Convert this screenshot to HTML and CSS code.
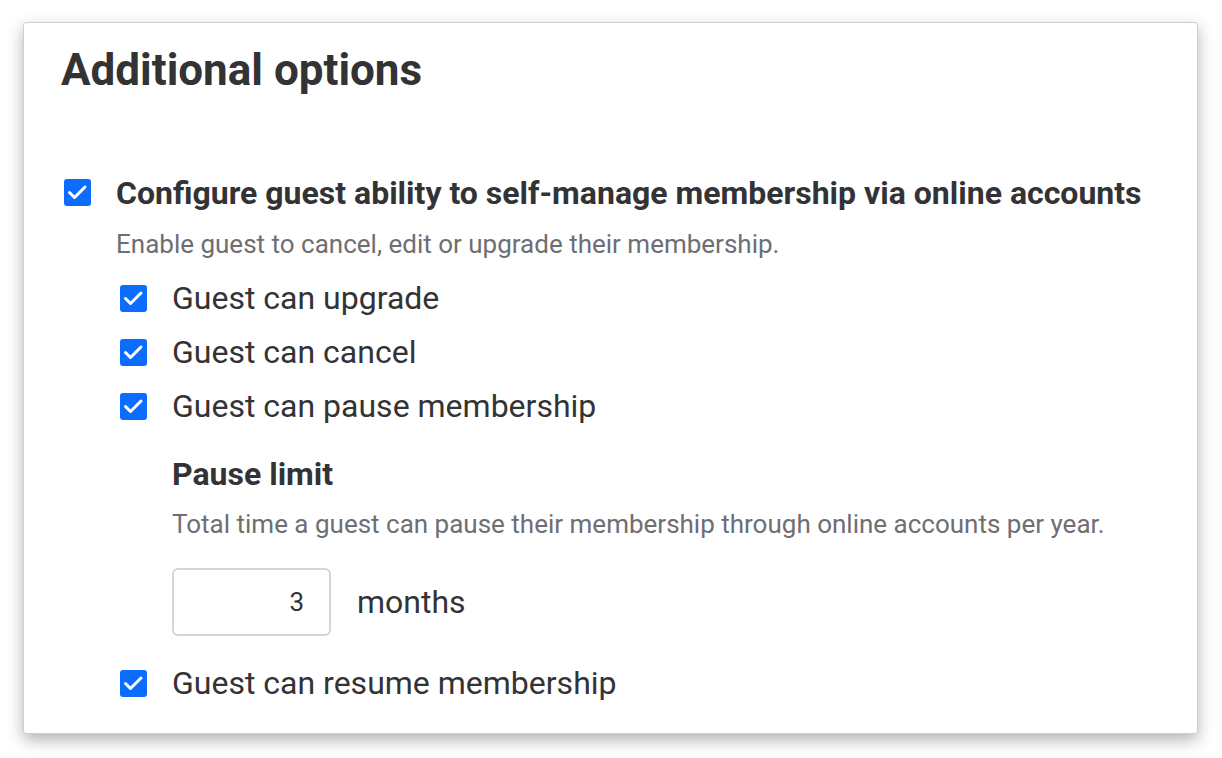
FILE: index.html
```html
<!DOCTYPE html>
<html lang="en">

<head>
    <meta charset="UTF-8">
    <meta name="viewport" content="width=device-width, initial-scale=1.0">
    <title>Additional options</title>
    <link rel="stylesheet" href="styles.css">
</head>

<body>
    <div class="card">
        <h2 class="card-title">Additional options</h2>

        <div class="option">
            <span class="check">
                <svg viewBox="0 0 27 27"><path d="M5.5 13.5 L10.5 18.5 L21 8" /></svg>
            </span>
            <div class="option-body">
                <strong class="option-label">Configure guest ability to self-manage membership via online accounts</strong>
                <p class="option-desc">Enable guest to cancel, edit or upgrade their membership.</p>

                <div class="sub-option">
                    <span class="check">
                        <svg viewBox="0 0 27 27"><path d="M5.5 13.5 L10.5 18.5 L21 8" /></svg>
                    </span>
                    <span>Guest can upgrade</span>
                </div>
                <div class="sub-option">
                    <span class="check">
                        <svg viewBox="0 0 27 27"><path d="M5.5 13.5 L10.5 18.5 L21 8" /></svg>
                    </span>
                    <span>Guest can cancel</span>
                </div>
                <div class="sub-option">
                    <span class="check">
                        <svg viewBox="0 0 27 27"><path d="M5.5 13.5 L10.5 18.5 L21 8" /></svg>
                    </span>
                    <span>Guest can pause membership</span>
                </div>

                <!-- 일시정지 한도 설정 -->
                <div class="pause-limit">
                    <strong class="pause-title">Pause limit</strong>
                    <p class="option-desc">Total time a guest can pause their membership through online accounts per year.</p>
                    <div class="limit-row">
                        <input class="limit-input" type="text" value="3">
                        <span>months</span>
                    </div>
                </div>

                <div class="sub-option last">
                    <span class="check">
                        <svg viewBox="0 0 27 27"><path d="M5.5 13.5 L10.5 18.5 L21 8" /></svg>
                    </span>
                    <span>Guest can resume membership</span>
                </div>
            </div>
        </div>
    </div>
</body>

</html>
```

FILE: styles.css
```css
body {
    margin: 0;
    padding-bottom: 30px;
    background-color: #fff;
    font-family: Roboto, "Liberation Sans", sans-serif;
    color: #333336;
}

.card {
    margin: 22px 0 0 23px;
    width: 1175px;
    height: 712px;
    box-sizing: border-box;
    padding: 22px 37px 0;
    border: 1px solid #cfcfcf;
    border-radius: 3px;
    background-color: #fff;
    box-shadow: 0 6px 16px rgba(0, 0, 0, 0.3);
}

.card-title {
    margin: 0;
    font-size: 44px;
    line-height: 50px;
    font-weight: 700;
}

.option {
    display: flex;
    gap: 25px;
    margin-top: 78px;
    padding-left: 3px;
}

/* 파란 체크박스 */
.check {
    flex: none;
    width: 27px;
    height: 27px;
    border-radius: 3px;
    background-color: #0b6cfd;
}

.check svg {
    display: block;
    width: 27px;
    height: 27px;
    fill: none;
    stroke: #fff;
    stroke-width: 3;
    stroke-linecap: round;
    stroke-linejoin: round;
}

.option > .check {
    margin-top: 6px;
}

.option-body {
    display: flex;
    flex-direction: column;
}

.option-label {
    font-size: 32px;
    line-height: 40px;
    font-weight: 700;
}

.option-desc {
    margin: 16px 0 0;
    font-size: 26px;
    line-height: 30px;
    color: #6e6e73;
}

.sub-option {
    display: flex;
    align-items: center;
    gap: 25px;
    height: 54px;
    padding-left: 4px;
    font-size: 32px;
}

.option-desc + .sub-option {
    margin-top: 12px;
}

.sub-option.last {
    margin-top: 20px;
}

.pause-limit {
    display: flex;
    flex-direction: column;
    padding-left: 56px;
    margin-top: 21px;
}

.pause-title {
    font-size: 32px;
    line-height: 40px;
    font-weight: 700;
}

.pause-limit .option-desc {
    margin-top: 15px;
}

.limit-row {
    display: flex;
    align-items: center;
    gap: 26px;
    margin-top: 29px;
    font-size: 32px;
}

.limit-input {
    width: 159px;
    height: 68px;
    box-sizing: border-box;
    padding: 0 25px 0 10px;
    border: 2px solid #d6d6d6;
    border-radius: 6px;
    font-family: inherit;
    font-size: 26px;
    color: #333336;
    text-align: right;
    outline: none;
}
```
